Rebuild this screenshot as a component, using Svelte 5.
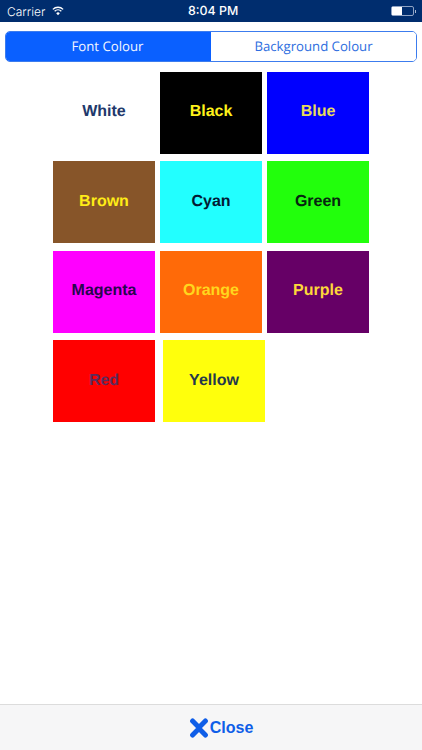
<script>
	const rows = [
		[
			{ name: "White", bg: "#ffffff", fg: "#21386b" },
			{ name: "Black", bg: "#000000", fg: "#fff21a" },
			{ name: "Blue", bg: "#0000ff", fg: "#e8dc5a" },
		],
		[
			{ name: "Brown", bg: "#875529", fg: "#ffec17" },
			{ name: "Cyan", bg: "#22ffff", fg: "#021a33" },
			{ name: "Green", bg: "#22ff0c", fg: "#06260f" },
		],
		[
			{ name: "Magenta", bg: "#ff00ff", fg: "#28064f" },
			{ name: "Orange", bg: "#ff6a08", fg: "#ffd61e" },
			{ name: "Purple", bg: "#660066", fg: "#fdd73a" },
		],
		[
			{ name: "Red", bg: "#ff0000", fg: "#5a2c5c" },
			{ name: "Yellow", bg: "#ffff0c", fg: "#24384c" },
		],
	];
</script>

<div class="screen">
	<header class="status">
		<div class="left">
			<span>Carrier</span>
			<svg class="wifi" viewBox="0 0 14 11" width="12" height="10">
				<path d="M1 3.6a8.6 8.6 0 0 1 12 0" fill="none" stroke="#fff" stroke-width="1.6" />
				<path d="M3.1 5.8a5.6 5.6 0 0 1 7.8 0" fill="none" stroke="#fff" stroke-width="1.6" />
				<path d="M7 10.4 4.9 8a3 3 0 0 1 4.2 0z" fill="#fff" />
			</svg>
		</div>
		<div class="time">8:04 PM</div>
		<div class="battery">
			<div class="cell"><div class="charge"></div></div>
			<div class="nub"></div>
		</div>
	</header>

	<div class="tabs">
		<div class="tab active">Font Colour</div>
		<div class="tab">Background Colour</div>
	</div>

	<main class="grid">
		{#each rows as row, i}
			<div class="row" class:wide={i === 3}>
				{#each row as c}
					<div class="tile" style="background: {c.bg}; color: {c.fg}">{c.name}</div>
				{/each}
			</div>
		{/each}
	</main>

	<footer class="bar">
		<button class="close">
			<svg viewBox="0 0 20 20" width="20" height="20">
				<path d="M3.6 3 10 9.4 16.4 3M3.6 17 10 10.6l6.4 6.4" fill="none" stroke="#0f5ee8" stroke-width="5" stroke-linecap="round" />
			</svg>
			<span>Close</span>
		</button>
	</footer>
</div>

<style>
	:global(body) {
		margin: 0;
		background: #fff;
	}

	.screen {
		width: 422px;
		height: 750px;
		display: flex;
		flex-direction: column;
		font-family: "Liberation Sans", Arial, sans-serif;
		text-rendering: geometricPrecision;
		overflow: hidden;
	}

	.status {
		height: 22px;
		background: #002d6e;
		color: #fff;
		display: flex;
		align-items: center;
		justify-content: space-between;
		padding: 0 6px 0 7px;
		font-size: 12px;
		position: relative;
		font-family: Inter, "Liberation Sans", sans-serif;
		font-weight: 300;
	}

	.left {
		display: flex;
		align-items: center;
		gap: 7px;
	}

	.wifi {
		margin-top: -1px;
	}

	.time {
		position: absolute;
		left: 188px;
		top: 3px;
		font-size: 12.4px;
		font-weight: 500;
	}

	.battery {
		display: flex;
		align-items: center;
	}

	.cell {
		width: 23px;
		height: 10px;
		border: 1px solid #8fa3c4;
		border-radius: 2px;
		box-sizing: border-box;
	}

	.charge {
		width: 10px;
		height: 8px;
		background: #fff;
	}

	.nub {
		width: 1.5px;
		height: 3px;
		margin-left: 1px;
		background: #a9b9d2;
	}

	.tabs {
		display: flex;
		margin: 9px 5px 0 5px;
		height: 31px;
		box-sizing: border-box;
		border: 1.5px solid #3c7cee;
		border-radius: 5px;
		overflow: hidden;
		font-size: 13.2px;
		font-family: "Open Sans", "Liberation Sans", sans-serif;
	}

	.tab {
		display: flex;
		align-items: center;
		justify-content: center;
		color: #2e6ee0;
		background: #fff;
		flex: 1;
		padding-bottom: 1px;
	}

	.tab.active {
		background: #0a60ff;
		color: #f2f6ff;
		flex: none;
		width: 205px;
		padding-right: 2px;
		box-sizing: border-box;
	}

	.grid {
		flex: 1;
		padding: 9.5px 0 0 53px;
		display: flex;
		flex-direction: column;
		gap: 7.5px;
	}

	.row {
		display: flex;
		gap: 5px;
	}

	.row.wide {
		gap: 8px;
	}

	.tile {
		width: 102px;
		height: 82px;
		display: flex;
		align-items: center;
		justify-content: center;
		font-size: 16px;
		font-weight: 700;
		padding-bottom: 1px;
		box-sizing: border-box;
	}

	.bar {
		height: 45px;
		flex: none;
		background: #f6f6f7;
		border-top: 1px solid #dcdcdc;
		display: flex;
		align-items: center;
		justify-content: center;
		padding-left: 20px;
	}

	.close {
		display: flex;
		align-items: center;
		gap: 1px;
		background: none;
		border: 0;
		padding: 0;
		color: #0f5ee8;
		font: 700 16px "Liberation Sans", Arial, sans-serif;
	}
</style>
